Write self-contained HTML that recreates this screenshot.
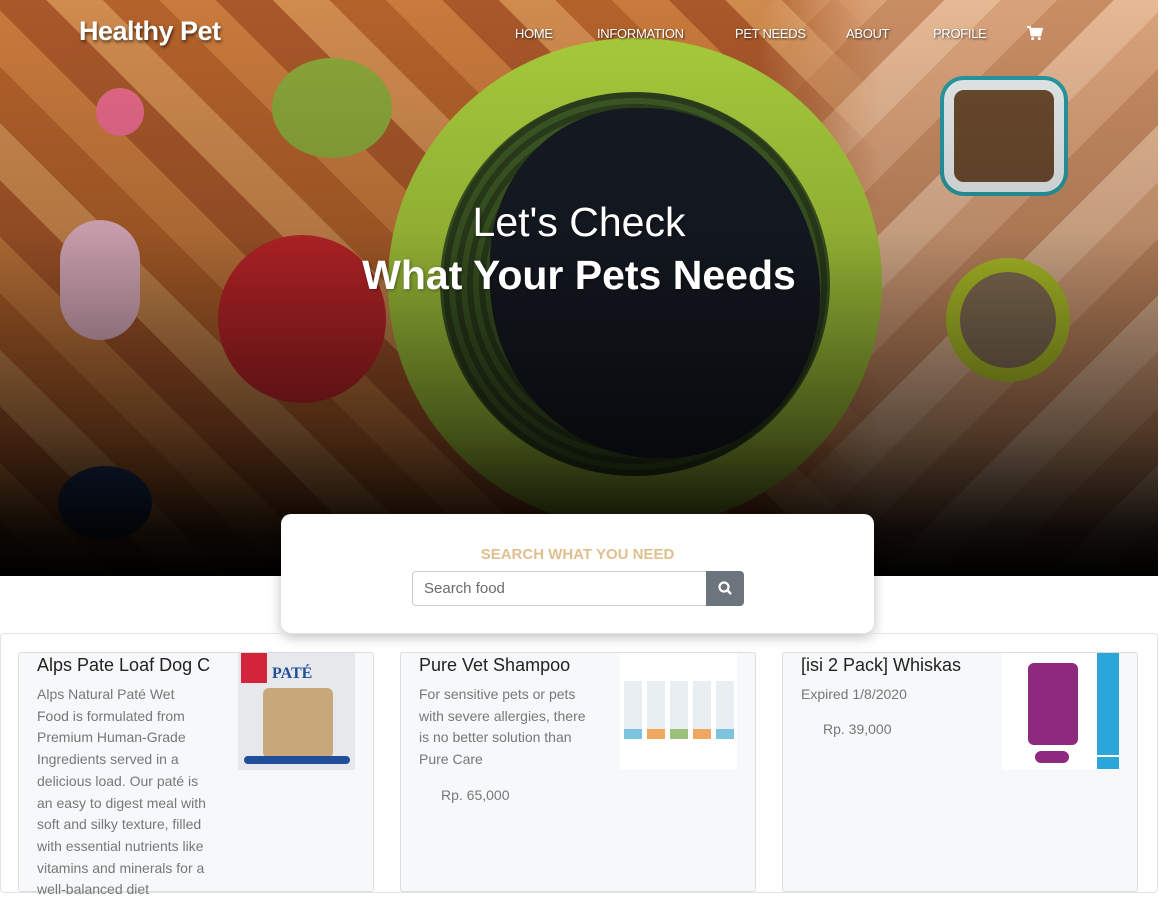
<!DOCTYPE html>
<html><head><meta charset="utf-8"><style>
*{box-sizing:border-box;margin:0;padding:0}
body{width:1170px;height:887px;overflow:hidden;background:#fff;font-family:"Liberation Sans",sans-serif}
.hero{position:absolute;left:0;top:0;width:1158px;height:576px;overflow:hidden;
background:repeating-linear-gradient(45deg,#b4622a 0 40px,#c97a3c 40px 80px,#a9582a 80px 120px,#d08b4e 120px 160px);}
.hero .right{position:absolute;left:760px;top:0;width:400px;height:576px;background:repeating-linear-gradient(-45deg,#d9a27a 0 40px,#e6b894 40px 80px,#c98d63 80px 120px);-webkit-mask-image:linear-gradient(to right,transparent,#000 120px);mask-image:linear-gradient(to right,transparent,#000 120px)}
.hero .shade{position:absolute;inset:0;background:linear-gradient(to bottom,rgba(0,0,0,0) 0,rgba(0,0,0,.15) 40%,rgba(0,0,0,.6) 75%,rgba(0,0,0,.92) 92%,#000 100%)}
.bed{position:absolute;left:388px;top:38px;width:494px;height:490px;border-radius:50%;background:#a9cd3c;}
.bedin{position:absolute;left:440px;top:92px;width:390px;height:384px;border-radius:50%;background:repeating-radial-gradient(circle at 50% 50%,#3d5a24 0 6px,#2c3f1c 6px 12px)}
.dog{position:absolute;left:490px;top:108px;width:330px;height:350px;border-radius:45% 55% 48% 52%;background:#161b24}
.fris{position:absolute;left:218px;top:235px;width:168px;height:168px;border-radius:50%;background:#c8272a}
.bowl1{position:absolute;left:944px;top:80px;width:120px;height:112px;border-radius:20px;background:#6b4a2e;border:10px solid #e8eded;box-shadow:0 0 0 4px #2a9aa4}
.bowl2{position:absolute;left:946px;top:258px;width:124px;height:124px;border-radius:50%;background:#8a7458;border:14px solid #b9cc2a}
nav{position:absolute;top:0;left:0;width:1158px;height:66px;color:#fff}
.logo{position:absolute;left:79px;top:16px;font-size:27px;font-weight:bold;text-shadow:1px 2px 3px rgba(0,0,0,.6);letter-spacing:-0.5px}
.menu{position:absolute;top:26px;font-size:13px;letter-spacing:-0.3px;text-shadow:1px 1px 2px rgba(0,0,0,.7)}
h1{position:absolute;left:0;width:1158px;text-align:center;color:#fff;font-weight:normal;text-shadow:1px 1px 3px rgba(0,0,0,.4)}
.search{position:absolute;left:281px;top:514px;width:593px;height:119px;background:#fff;border-radius:10px;box-shadow:0 4px 12px rgba(0,0,0,.25)}
.search .t{position:absolute;top:32px;width:100%;text-align:center;color:#e0bf8e;font-weight:bold;font-size:15px}
.search .inp{position:absolute;left:131px;top:57px;width:295px;height:35px;border:1px solid #ccc;border-radius:4px 0 0 4px;color:#6b6b6b;font-size:15px;padding:8px 11px}
.search .btn{position:absolute;left:425px;top:57px;width:38px;height:35px;background:#6c757d;border-radius:0 4px 4px 0}
.sec{position:absolute;left:0;top:633px;width:1158px;height:260px;border:1px solid #e3e3e3;border-radius:4px}
.card{position:absolute;top:652px;width:356px;height:240px;background:#f7f8fa;border:1px solid #dcdcdc;border-radius:3px}
.card h3{position:absolute;left:18px;top:2px;font-size:18px;font-weight:normal;color:#222}
.card p{position:absolute;left:18px;top:31px;font-size:14px;line-height:21.7px;color:#777}
.price{position:absolute;font-size:14px;color:#777}
</style></head><body>
<div class="hero"><div class="right"></div>
<div class="bed"></div><div class="bedin"></div><div class="dog"></div>
<div class="fris"></div><div class="bowl1"></div><div class="bowl2"></div>
<div style="position:absolute;left:60px;top:220px;width:80px;height:120px;border-radius:40px;background:#e8b6c8"></div>
<div style="position:absolute;left:272px;top:58px;width:120px;height:100px;border-radius:50%;background:#8ca83a"></div>
<div style="position:absolute;left:96px;top:88px;width:48px;height:48px;border-radius:50%;background:#e86a8a"></div>
<div style="position:absolute;left:58px;top:466px;width:94px;height:74px;border-radius:50%;background:#1f3a66"></div>
<div class="shade"></div></div>
<nav><div class="logo">Healthy Pet</div>
<span class="menu" style="left:515px">HOME</span>
<span class="menu" style="left:597px">INFORMATION</span>
<span class="menu" style="left:735px">PET NEEDS</span>
<span class="menu" style="left:846px">ABOUT</span>
<span class="menu" style="left:933px">PROFILE</span>
<svg style="position:absolute;left:1027px;top:26px" width="16" height="15" viewBox="0 0 17 16"><path d="M0 1h3l2 9h9l2-7H4" fill="none" stroke="#fff" stroke-width="2"/><rect x="5" y="4" width="10" height="5" fill="#fff"/><circle cx="6" cy="13.5" r="1.6" fill="#fff"/><circle cx="13" cy="13.5" r="1.6" fill="#fff"/></svg>
</nav>
<h1 style="top:199px;font-size:41px;font-weight:300">Let's Check</h1>
<h1 style="top:252px;font-size:41px;font-weight:bold">What Your Pets Needs</h1>
<div class="search"><div class="t">SEARCH WHAT YOU NEED</div><div class="inp">Search food</div>
<div class="btn"><svg width="38" height="35" viewBox="0 0 38 35"><circle cx="18" cy="16" r="4.5" fill="none" stroke="#fff" stroke-width="2.2"/><path d="M21 19l4 4" stroke="#fff" stroke-width="2.5"/></svg></div></div>
<div class="sec"></div>
<div class="card" style="left:18px"><h3>Alps Pate Loaf Dog C</h3>
<p>Alps Natural Paté Wet<br>Food is formulated from<br>Premium Human-Grade<br>Ingredients served in a<br>delicious load. Our paté is<br>an easy to digest meal with<br>soft and silky texture, filled<br>with essential nutrients like<br>vitamins and minerals for a<br>well-balanced diet</p>
<div style="position:absolute;left:219px;top:0;width:117px;height:117px;background:#e6e8ec"><div style="position:absolute;left:3px;top:0;width:26px;height:30px;background:#d4243c"></div><div style="position:absolute;left:34px;top:12px;font:bold 16px 'Liberation Serif',serif;color:#1f4f9a">PATÉ</div><div style="position:absolute;left:25px;top:35px;width:70px;height:70px;background:#c8a77a;border-radius:6px"></div><div style="position:absolute;left:6px;top:103px;width:106px;height:8px;background:#1f4f9a;border-radius:4px"></div></div></div>
<div class="card" style="left:400px"><h3>Pure Vet Shampoo</h3>
<p>For sensitive pets or pets<br>with severe allergies, there<br>is no better solution than<br>Pure Care</p>
<span class="price" style="left:40px;top:134px">Rp. 65,000</span>
<div style="position:absolute;left:219px;top:0;width:117px;height:117px;background:#fff">
<div style="position:absolute;left:4px;top:28px;width:18px;height:58px;background:#e8eef2;border-bottom:10px solid #7cc4de"></div>
<div style="position:absolute;left:27px;top:28px;width:18px;height:58px;background:#e8eef2;border-bottom:10px solid #f0a860"></div>
<div style="position:absolute;left:50px;top:28px;width:18px;height:58px;background:#e8eef2;border-bottom:10px solid #9bc07a"></div>
<div style="position:absolute;left:73px;top:28px;width:18px;height:58px;background:#e8eef2;border-bottom:10px solid #f0a860"></div>
<div style="position:absolute;left:96px;top:28px;width:18px;height:58px;background:#e8eef2;border-bottom:10px solid #7cc4de"></div></div></div>
<div class="card" style="left:782px"><h3>[isi 2 Pack] Whiskas</h3>
<p>Expired 1/8/2020</p>
<span class="price" style="left:40px;top:68px">Rp. 39,000</span>
<div style="position:absolute;left:219px;top:0;width:117px;height:117px;background:#fff">
<div style="position:absolute;left:26px;top:10px;width:50px;height:82px;background:#8d2a7e;border-radius:6px"></div>
<div style="position:absolute;left:33px;top:98px;width:34px;height:12px;background:#8d2a7e;border-radius:6px"></div>
<div style="position:absolute;left:95px;top:0;width:22px;height:102px;background:#2aa6d8"></div>
<div style="position:absolute;left:95px;top:104px;width:22px;height:12px;background:#2aa6d8"></div></div></div>
</body></html>
